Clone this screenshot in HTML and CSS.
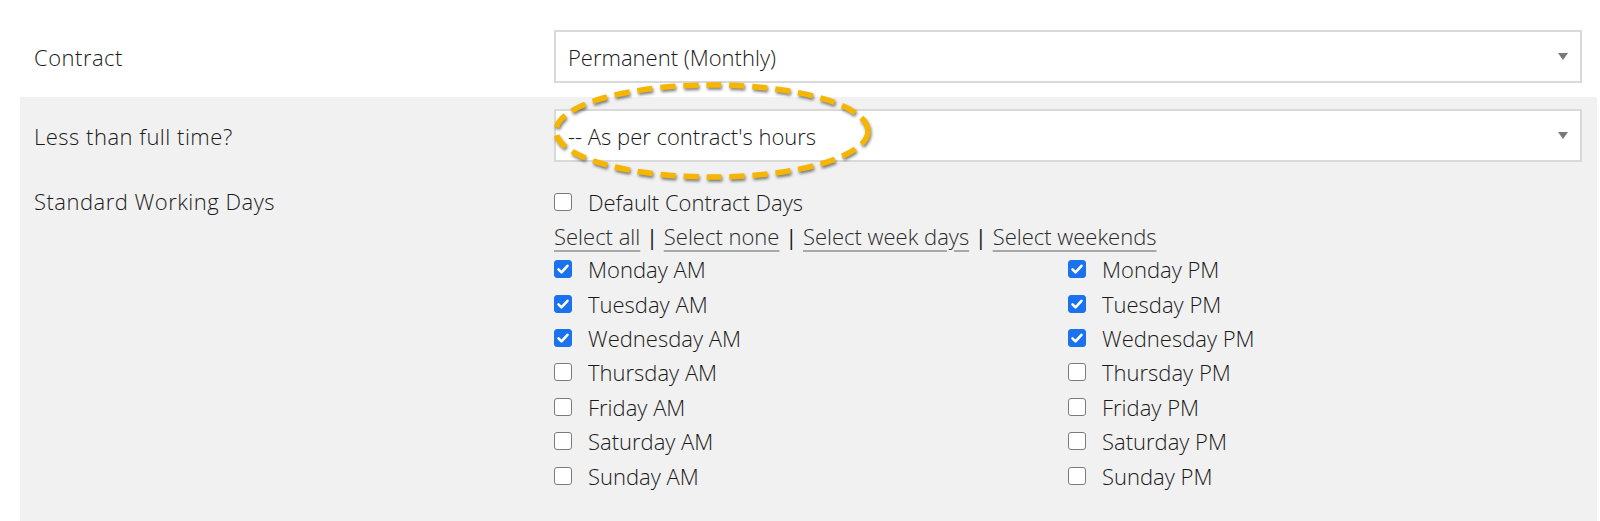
FILE: index.html
```html
<!DOCTYPE html>
<html lang="en">
<head>
<meta charset="utf-8">
<title>Contract</title>
<link rel="stylesheet" href="styles.css">
</head>
<body>
<div class="form">
  <div class="row row-contract">
    <div class="label">Contract</div>
    <div class="field">
      <div class="select"><span class="value">Permanent (Monthly)</span><span class="arrow"></span></div>
    </div>
  </div>
  <div class="panel">
    <div class="row row-ltft">
      <div class="label">Less than full time?</div>
      <div class="field">
        <div class="select-wrap">
          <div class="select"><span class="value">-- As per contract's hours</span><span class="arrow"></span></div>
          <svg class="callout" width="340" height="116" viewBox="0 0 340 116" aria-hidden="true">
            <ellipse cx="164" cy="52" rx="156" ry="46" fill="none" stroke="#f6b600" stroke-width="5.5" stroke-dasharray="15 8" stroke-linecap="butt"/>
          </svg>
        </div>
      </div>
    </div>
    <div class="row row-days">
      <div class="label">Standard Working Days</div>
      <div class="field">
        <label class="check default"><span class="cb"></span>Default Contract Days</label>
        <div class="links"><a href="#">Select all</a><span class="sep"> | </span><a href="#">Select none</a><span class="sep"> | </span><a href="#">Select week days</a><span class="sep"> | </span><a href="#">Select weekends</a></div>
        <div class="days">
          <label class="check"><span class="cb on"><svg viewBox="0 0 18 18"><path d="M4.5 9.4l3 3 6-6.6"/></svg></span>Monday AM</label>
          <label class="check"><span class="cb on"><svg viewBox="0 0 18 18"><path d="M4.5 9.4l3 3 6-6.6"/></svg></span>Monday PM</label>
          <label class="check"><span class="cb on"><svg viewBox="0 0 18 18"><path d="M4.5 9.4l3 3 6-6.6"/></svg></span>Tuesday AM</label>
          <label class="check"><span class="cb on"><svg viewBox="0 0 18 18"><path d="M4.5 9.4l3 3 6-6.6"/></svg></span>Tuesday PM</label>
          <label class="check"><span class="cb on"><svg viewBox="0 0 18 18"><path d="M4.5 9.4l3 3 6-6.6"/></svg></span>Wednesday AM</label>
          <label class="check"><span class="cb on"><svg viewBox="0 0 18 18"><path d="M4.5 9.4l3 3 6-6.6"/></svg></span>Wednesday PM</label>
          <label class="check"><span class="cb"></span>Thursday AM</label>
          <label class="check"><span class="cb"></span>Thursday PM</label>
          <label class="check"><span class="cb"></span>Friday AM</label>
          <label class="check"><span class="cb"></span>Friday PM</label>
          <label class="check"><span class="cb"></span>Saturday AM</label>
          <label class="check"><span class="cb"></span>Saturday PM</label>
          <label class="check"><span class="cb"></span>Sunday AM</label>
          <label class="check"><span class="cb"></span>Sunday PM</label>
        </div>
      </div>
    </div>
  </div>
</div>
</body>
</html>
```

FILE: styles.css
```css
* { box-sizing: border-box; }
html, body {
  margin: 0;
  padding: 0;
  background: #ffffff;
}
body {
  font-family: "Open Sans", "Liberation Sans", sans-serif;
  font-size: 22px;
  font-weight: 300;
  color: #1a1a1a;
  width: 1600px;
  height: 521px;
  overflow: hidden;
}
.form { width: 1600px; }
.row { display: flex; }
.label {
  width: 520px;
  flex: none;
  letter-spacing: 0.5px;
}
.field {
  width: 1028px;
  flex: none;
}
.row-contract {
  padding: 30px 0 14px 34px;
}
.row-contract .label,
.row-ltft .label {
  display: flex;
  align-items: center;
}
.panel {
  margin-left: 20px;
  width: 1577px;
  height: 424px;
  background: #f1f1f1;
  padding: 12px 0 0 14px;
}
.select-wrap { position: relative; }
.select {
  height: 53px;
  background: #ffffff;
  border: 2px solid #d9d9d9;
  display: flex;
  align-items: center;
  justify-content: space-between;
  padding: 0 12px 0 12px;
}
.value { line-height: 1; }
.arrow {
  width: 0;
  height: 0;
  border-left: 5px solid transparent;
  border-right: 5px solid transparent;
  border-top: 7px solid #7a7a7a;
}
.callout {
  position: absolute;
  left: -6px;
  top: -30px;
  filter: drop-shadow(1px 2px 1.5px rgba(0, 0, 0, 0.5));
  pointer-events: none;
}
.row-days { margin-top: 22px; }
.row-days .label {
  line-height: 35px;
}
.check {
  display: flex;
  align-items: center;
  gap: 16px;
  height: 34.4px;
}
.check.default { height: 35px; }
.cb {
  width: 18px;
  height: 18px;
  flex: none;
  border: 1.5px solid #7b7b7b;
  border-radius: 3px;
  background: #ffffff;
  display: flex;
  align-items: center;
  justify-content: center;
}
.cb.on {
  background: #1b72ef;
  border-color: #1b72ef;
}
.cb svg {
  width: 18px;
  height: 18px;
  flex: none;
}
.cb svg path {
  fill: none;
  stroke: #ffffff;
  stroke-width: 2.6;
  stroke-linecap: round;
  stroke-linejoin: round;
}
.links {
  height: 33px;
  display: flex;
  align-items: center;
  white-space: pre;
}
.links a {
  color: #2a2a2a;
  text-decoration: underline;
  text-decoration-color: #a9a9a9;
  text-decoration-thickness: 2px;
  text-underline-offset: 5px;
}
.sep {
  color: #1a1a1a;
  font-weight: 400;
}
.days {
  display: grid;
  grid-template-columns: 514px 514px;
}
```
